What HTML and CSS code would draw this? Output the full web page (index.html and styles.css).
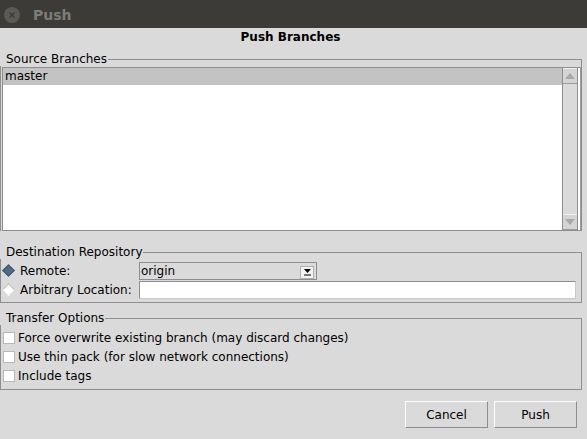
FILE: index.html
```html
<!DOCTYPE html>
<html>
<head>
<meta charset="utf-8">
<link rel="stylesheet" href="styles.css">
</head>
<body>
<div class="window">
  <div class="titlebar">
    <span class="close"><svg width="16" height="16" viewBox="0 0 16 16"><circle cx="8" cy="8" r="8" fill="#5b5a56"/><path d="M5.5 5.5 L10.5 10.5 M10.5 5.5 L5.5 10.5" stroke="#3a3935" stroke-width="1.4"/></svg></span>
    <span class="title">Push</span>
  </div>
  <div class="heading">Push Branches</div>

  <fieldset class="group source">
    <legend>Source Branches</legend>
    <div class="listpane">
      <div class="list">
        <div class="row selected">master</div>
      </div>
      <div class="scrollbar">
        <div class="sbtn"><svg width="10" height="6" viewBox="0 0 10 6"><path d="M0 6 L5 0 L10 6 Z" fill="#a8a8a8"/></svg></div>
        <div class="track"></div>
        <div class="sbtn"><svg width="10" height="6" viewBox="0 0 10 6"><path d="M0 0 L5 6 L10 0 Z" fill="#a8a8a8"/></svg></div>
      </div>
    </div>
  </fieldset>

  <fieldset class="group dest">
    <legend>Destination Repository</legend>
    <div class="formrow">
      <span class="radio on"></span>
      <span class="lbl">Remote:</span>
      <div class="combo"><span>origin</span><span class="cbtn"><svg width="9" height="8" viewBox="0 0 9 8"><path d="M1 1 L8 1 L4.5 5 Z" fill="#000"/><rect x="1" y="6.5" width="7" height="1" fill="#000"/></svg></span></div>
    </div>
    <div class="formrow">
      <span class="radio"></span>
      <span class="lbl">Arbitrary Location:</span>
      <div class="textfield"></div>
    </div>
  </fieldset>

  <fieldset class="group transfer">
    <legend>Transfer Options</legend>
    <label class="check"><span class="box"></span>Force overwrite existing branch (may discard changes)</label>
    <label class="check"><span class="box"></span>Use thin pack (for slow network connections)</label>
    <label class="check"><span class="box"></span>Include tags</label>
  </fieldset>

  <div class="buttons">
    <button class="btn">Cancel</button>
    <button class="btn">Push</button>
  </div>
</div>
</body>
</html>
```

FILE: styles.css
```css
html, body {
  margin: 0;
  padding: 0;
}
body {
  width: 587px;
  height: 439px;
  background: #dadada;
  font-family: "DejaVu Sans", sans-serif;
  font-size: 12px;
  color: #000;
  overflow: hidden;
}
.window {
  display: flex;
  flex-direction: column;
  height: 439px;
}
.titlebar {
  height: 28px;
  background: #3c3b37;
  display: flex;
  align-items: center;
  flex: none;
}
.close {
  display: flex;
  margin-left: 4px;
  margin-top: 1px;
}
.title {
  margin-left: 13px;
  font-weight: bold;
  font-size: 14px;
  color: #7d7c77;
  margin-top: 1px;
}
.heading {
  text-align: center;
  font-weight: bold;
  height: 17px;
  line-height: 17px;
  margin-top: 1px;
  padding-right: 6px;
}
.group {
  margin: 0 5px 0 0;
  border: 1px solid #8e8e8e;
  padding: 0;
  min-width: 0;
}
.group legend {
  padding: 0 1px 0 6px;
  margin-left: -1px;
  line-height: 14px;
}
.source {
  margin-top: 6px;
  border-bottom: none;
}
.listpane {
  display: flex;
  height: 162px;
  margin: 1px 0 0 1px;
  border: 1px solid #8e8e8e;
  border-right-color: #9a9a9a;
  background: #fff;
}
.list {
  flex: 1;
}
.row {
  height: 17px;
  line-height: 17px;
  padding-left: 2px;
}
.row.selected {
  background: #c3c3c3;
}
.scrollbar {
  width: 14px;
  margin-right: 2px;
  border-left: 1px solid #8e8e8e;
  border-right: 1px solid #8e8e8e;
  background: #dadada;
  display: flex;
  flex-direction: column;
}
.sbtn {
  height: 14px;
  display: flex;
  align-items: center;
  justify-content: center;
  background: #d4d4d4;
  border-top: 1px solid #f0f0f0;
  border-bottom: 1px solid #9a9a9a;
}
.track {
  flex: 1;
}
.dest {
  margin-top: 14px;
  padding-top: 2px;
  padding-bottom: 3px;
}
.formrow {
  display: flex;
  align-items: center;
  height: 19px;
}
.radio {
  width: 7px;
  height: 7px;
  transform: rotate(45deg);
  margin-left: 3px;
  margin-right: 7px;
  border: 1px solid #b4b4b4;
  border-right-color: #f4f4f4;
  border-bottom-color: #f4f4f4;
  background: #fff;
  flex: none;
}
.radio.on {
  background: #4f6a86;
  border-color: #3f566e;
}
.lbl {
  width: 119px;
  flex: none;
}
.combo {
  width: 175px;
  height: 16px;
  border: 1px solid #8e8e8e;
  background: #dadada;
  display: flex;
  align-items: center;
  justify-content: space-between;
  padding-left: 1px;
}
.cbtn {
  width: 12px;
  height: 11px;
  background: #f2f2f2;
  border: 1px solid #b0b0b0;
  margin-right: 2px;
  margin-top: 3px;
  display: flex;
  align-items: center;
  justify-content: center;
}
.textfield {
  width: 435px;
  height: 16px;
  border: 1px solid #8e8e8e;
  border-right-color: #c8c8c8;
  border-bottom-color: #c8c8c8;
  background: #fff;
}
.transfer {
  margin-top: 8px;
  padding-top: 3px;
  padding-bottom: 4px;
}
.check {
  display: flex;
  align-items: center;
  height: 19px;
}
.box {
  width: 10px;
  height: 10px;
  border: 1px solid #b8b8b8;
  background: #fff;
  margin-left: 2px;
  margin-right: 3px;
  flex: none;
}
.buttons {
  display: flex;
  justify-content: flex-end;
  gap: 6px;
  margin-top: 11px;
  padding-right: 10px;
}
.btn {
  width: 83px;
  height: 27px;
  font-family: "DejaVu Sans", sans-serif;
  font-size: 12px;
  color: #000;
  background: #dadada;
  border: 1px solid;
  border-color: #ffffff #8e8e8e #8e8e8e #ffffff;
  padding: 0;
}
```
